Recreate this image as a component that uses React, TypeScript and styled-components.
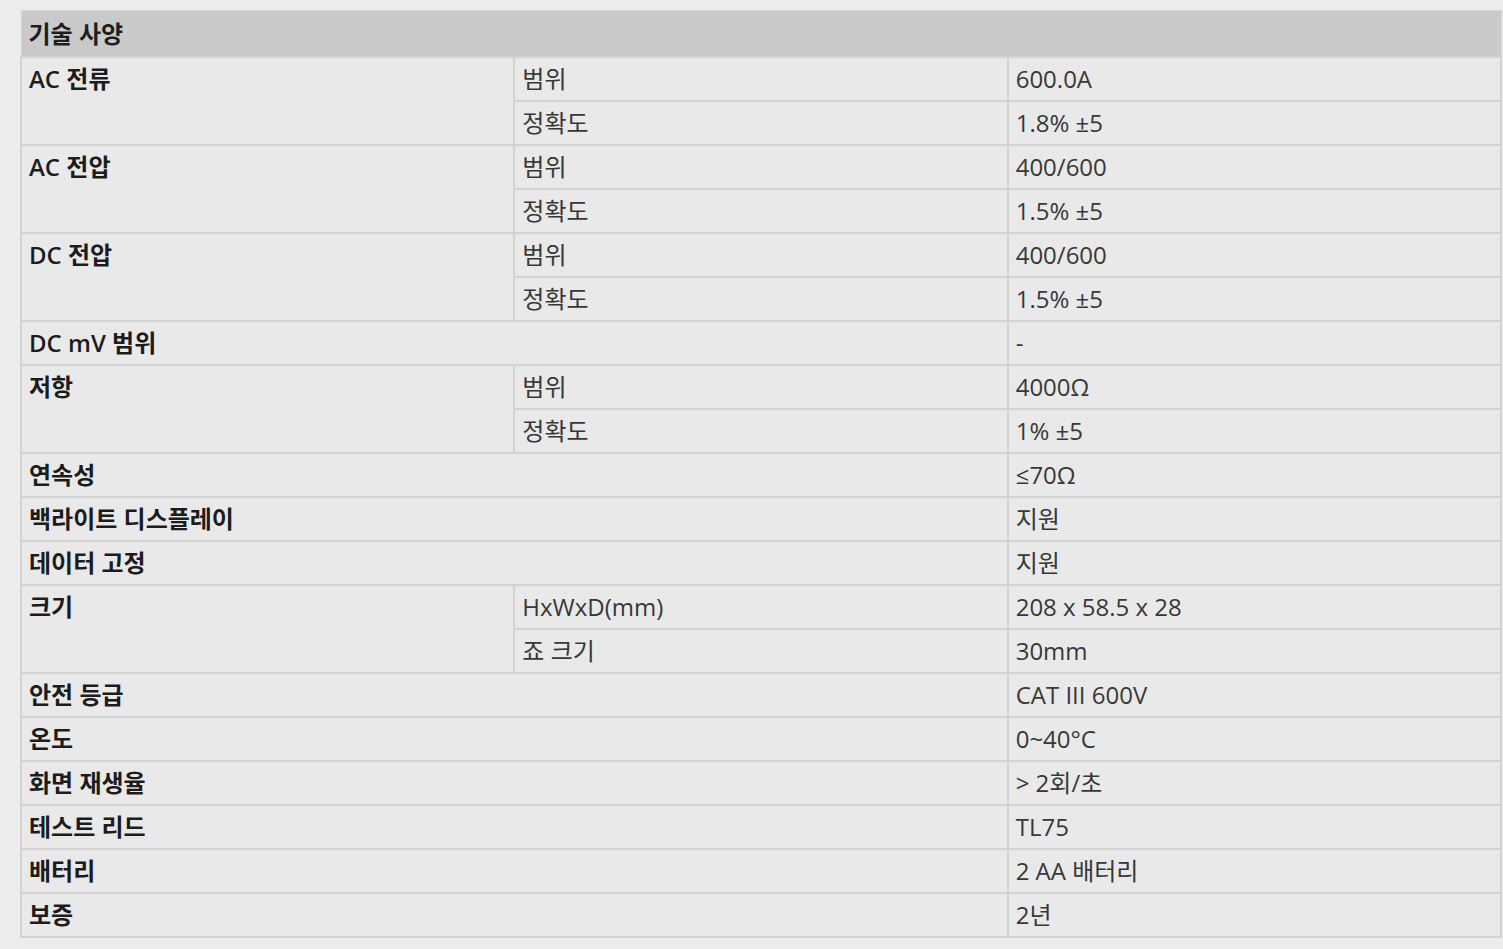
import React from 'react';
import styled, { createGlobalStyle } from 'styled-components';

const GlobalStyle = createGlobalStyle`
  html, body {
    margin: 0;
    padding: 0;
    background: #ececec;
  }
  body {
    font-family: 'Open Sans', 'Noto Sans CJK KR', sans-serif;
  }
`;

const Page = styled.div`
  padding: 10px 1px 12px 20px;
`;

const SpecTable = styled.table`
  width: 100%;
  table-layout: fixed;
  border-collapse: collapse;
  background: #e9e9e9;
  border: 1px solid #d6d6d6;
  font-size: 24px;
  color: #2a2a2a;
`;

const Col = styled.col`
  width: 33.333%;
`;

const HeadCell = styled.th`
  background: #cacaca;
  height: 45px;
  padding: 0 7px;
  text-align: left;
  font-weight: 600;
  color: #1e1e1e;
  line-height: 40px;
`;

const Cell = styled.td<{ $label?: boolean }>`
  height: 40px;
  padding: 2px 7px 0;
  border: 2px solid #d2d2d2;
  vertical-align: top;
  line-height: 38px;
  font-weight: ${(p) => (p.$label ? 600 : 400)};
  color: ${(p) => (p.$label ? '#1c1c1c' : '#383838')};
  white-space: nowrap;
  overflow: hidden;
`;

type Spec = {
  label: string;
  subs?: [string, string][];
  value?: string;
};

const specs: Spec[] = [
  { label: 'AC 전류', subs: [['범위', '600.0A'], ['정확도', '1.8% ±5']] },
  { label: 'AC 전압', subs: [['범위', '400/600'], ['정확도', '1.5% ±5']] },
  { label: 'DC 전압', subs: [['범위', '400/600'], ['정확도', '1.5% ±5']] },
  { label: 'DC mV 범위', value: '-' },
  { label: '저항', subs: [['범위', '4000Ω'], ['정확도', '1% ±5']] },
  { label: '연속성', value: '≤70Ω' },
  { label: '백라이트 디스플레이', value: '지원' },
  { label: '데이터 고정', value: '지원' },
  { label: '크기', subs: [['HxWxD(mm)', '208 x 58.5 x 28'], ['죠 크기', '30mm']] },
  { label: '안전 등급', value: 'CAT III 600V' },
  { label: '온도', value: '0~40°C' },
  { label: '화면 재생율', value: '> 2회/초' },
  { label: '테스트 리드', value: 'TL75' },
  { label: '배터리', value: '2 AA 배터리' },
  { label: '보증', value: '2년' },
];

const App: React.FC = () => {
  return (
    <Page>
      <GlobalStyle />
      <SpecTable>
        <colgroup>
          <Col />
          <Col />
          <Col />
        </colgroup>
        <thead>
          <tr>
            <HeadCell colSpan={3}>기술 사양</HeadCell>
          </tr>
        </thead>
        <tbody>
          {specs.map((s) =>
            s.subs ? (
              s.subs.map(([name, val], i) => (
                <tr key={s.label + name}>
                  {i === 0 && (
                    <Cell $label rowSpan={s.subs!.length}>
                      {s.label}
                    </Cell>
                  )}
                  <Cell>{name}</Cell>
                  <Cell>{val}</Cell>
                </tr>
              ))
            ) : (
              <tr key={s.label}>
                <Cell $label colSpan={2}>
                  {s.label}
                </Cell>
                <Cell>{s.value}</Cell>
              </tr>
            )
          )}
        </tbody>
      </SpecTable>
    </Page>
  );
};

export default App;
